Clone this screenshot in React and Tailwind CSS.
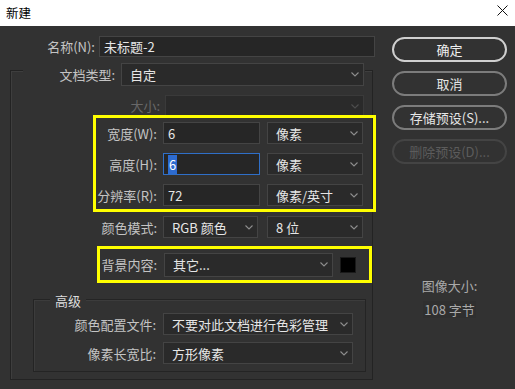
import React from "react";

const Chevron = ({ c = "#9a9a9a" }) => (
  <svg width="8" height="5" viewBox="0 0 8 5" className="shrink-0">
    <path d="M0.5 0.5 L4 4 L7.5 0.5" fill="none" stroke={c} strokeWidth="1.1" />
  </svg>
);

function Sel({ className = "", children, disabled }) {
  return (
    <div
      className={`flex items-center justify-between border bg-[#2a2a2a] pl-[8px] pr-[4px] ${
        disabled ? "border-[#3a3a3a]" : "border-[#444444]"
      } ${className}`}
    >
      <span className="text-[13px] leading-none text-[#e6e6e6] whitespace-nowrap">{children}</span>
      <Chevron c={disabled ? "#4e4e4e" : "#8e8e8e"} />
    </div>
  );
}

function Inp({ className = "", children, focus }) {
  return (
    <div
      className={`flex items-center border bg-[#262626] pl-[4px] ${
        focus ? "border-[#2f6fc8]" : "border-[#444444]"
      } ${className}`}
    >
      <span className="text-[13px] leading-none text-[#e6e6e6] whitespace-nowrap">{children}</span>
    </div>
  );
}

function Label({ className = "", children, dim }) {
  return (
    <div
      className={`shrink-0 text-right text-[13px] leading-none whitespace-nowrap ${
        dim ? "text-[#686868]" : "text-[#c4c4c4]"
      } ${className}`}
    >
      {children}
    </div>
  );
}

function Btn({ children, kind }) {
  const cls =
    kind === "primary"
      ? "border-[2px] border-[#cfcfcf] text-[#efefef]"
      : kind === "disabled"
      ? "border-[2px] border-[#444444] text-[#5c5c5c]"
      : "border-[2px] border-[#7c7c7c] text-[#e6e6e6]";
  return (
    <div className={`flex h-[25px] w-[115px] items-center justify-center rounded-full text-[13px] leading-none ${cls}`}>
      {children}
    </div>
  );
}

export default function App() {
  return (
    <div
      className="h-[389px] w-[515px] overflow-hidden bg-[#323232]"
      style={{ fontFamily: '"Noto Sans CJK SC", "Noto Sans", sans-serif' }}
    >
      {/* title bar */}
      <div className="flex h-[26px] items-center justify-between bg-white pl-[6px] pr-[7px]">
        <span className="text-[12.5px] leading-none text-black">新建</span>
        <svg width="11" height="11" viewBox="0 0 11 11" className="-mt-[5px]">
          <path d="M0.5 0.5 L10.5 10.5 M10.5 0.5 L0.5 10.5" stroke="#111" strokeWidth="1" />
        </svg>
      </div>

      <div className="flex">
        {/* left */}
        <div className="w-[378px] shrink-0">
          {/* name */}
          <div className="mt-[10px] flex h-[21px] items-center">
            <Label className="w-[95px]">名称(N):</Label>
            <Inp className="ml-[4px] h-[21px] w-[276px]">未标题-2</Inp>
          </div>

          {/* main frame */}
          <div className="ml-[10px] mt-[13px] h-[310px] w-[363px] border border-[#232323] shadow-[inset_1px_1px_0_#3e3e3e]">
            {/* frame title */}
            <div className="-mt-[8px] ml-[12px] flex h-[23px] w-[342px] items-center bg-[#323232]">
              <Label className="w-[92px]">文档类型:</Label>
              <Sel className="ml-[6px] h-[23px] w-[243px]">自定</Sel>
            </div>

            {/* size */}
            <div className="mt-[9px] flex h-[20px] items-start">
              <Label dim className="w-[149px] pt-[4px]">大小:</Label>
              <Sel disabled className="ml-[5px] h-[22px] w-[199px]"></Sel>
            </div>

            {/* yellow 1 */}
            <div className="relative ml-[82px] h-[97px] w-[283px] border-[3px] border-[#ffff00] pt-[4px]">
              <div className="flex flex-col gap-[9px]">
                <div className="flex h-[22px] items-center">
                  <Label className="w-[61px]">宽度(W):</Label>
                  <Inp className="ml-[6px] h-[22px] w-[97px]">6</Inp>
                  <Sel className="ml-[7px] h-[22px] w-[96px]">像素</Sel>
                </div>
                <div className="flex h-[22px] items-center">
                  <Label className="w-[61px]">高度(H):</Label>
                  <Inp focus className="ml-[6px] h-[22px] w-[97px]">
                    <span className="bg-[#2d6bd0] px-[1px] text-white">6</span>
                  </Inp>
                  <Sel className="ml-[7px] h-[22px] w-[96px]">像素</Sel>
                </div>
                <div className="flex h-[22px] items-center">
                  <Label className="w-[61px]">分辨率(R):</Label>
                  <Inp className="ml-[6px] h-[22px] w-[97px]">72</Inp>
                  <Sel className="ml-[7px] h-[22px] w-[96px]">像素/英寸</Sel>
                </div>
              </div>
            </div>

            {/* color mode */}
            <div className="mt-[4px] flex h-[22px] items-center">
              <Label className="w-[146px]">颜色模式:</Label>
              <Sel className="ml-[6px] h-[22px] w-[95px]">RGB 颜色</Sel>
              <Sel className="ml-[9px] h-[22px] w-[96px]">8 位</Sel>
            </div>

            {/* yellow 2 */}
            <div className="ml-[86px] mt-[8px] flex h-[37px] w-[275px] items-center border-[3px] border-[#ffff00]">
              <Label className="w-[57px]">背景内容:</Label>
              <Sel className="ml-[7px] h-[24px] w-[169px]">其它...</Sel>
              <div className="ml-[7px] h-[16px] w-[16px] border border-[#1a1a1a] bg-black" />
            </div>

            {/* advanced */}
            <div className="ml-[22px] mt-[16px] h-[73px] w-[333px] border border-[#242424] shadow-[inset_1px_1px_0_#3c3c3c]">
              <div className="-mt-[9px] ml-[16px] flex h-[18px] w-fit items-center bg-[#323232] px-[5px]">
                <span className="text-[13px] leading-none text-[#dcdcdc]">高级</span>
              </div>
              <div className="mt-[4px] flex h-[22px] items-center">
                <Label className="w-[122px]">颜色配置文件:</Label>
                <Sel className="ml-[7px] h-[22px] w-[190px]">不要对此文档进行色彩管理</Sel>
              </div>
              <div className="mt-[7px] flex h-[22px] items-center">
                <Label className="w-[122px]">像素长宽比:</Label>
                <Sel className="ml-[7px] h-[22px] w-[190px]">方形像素</Sel>
              </div>
            </div>
          </div>
        </div>

        {/* right */}
        <div className="ml-[14px] mt-[11px] flex w-[115px] flex-col items-center">
          <div className="flex flex-col gap-[9px]">
            <Btn kind="primary">确定</Btn>
            <Btn>取消</Btn>
            <Btn>存储预设(S)...</Btn>
            <Btn kind="disabled">删除预设(D)...</Btn>
          </div>
          <div className="mt-[115px] text-[13px] leading-none text-[#a9a9a9]">图像大小:</div>
          <div className="mt-[9px] bg-[#2f2f2f] px-[1px] py-[2px] text-[13px] leading-none text-[#a9a9a9]">108 字节</div>
        </div>
      </div>
    </div>
  );
}
